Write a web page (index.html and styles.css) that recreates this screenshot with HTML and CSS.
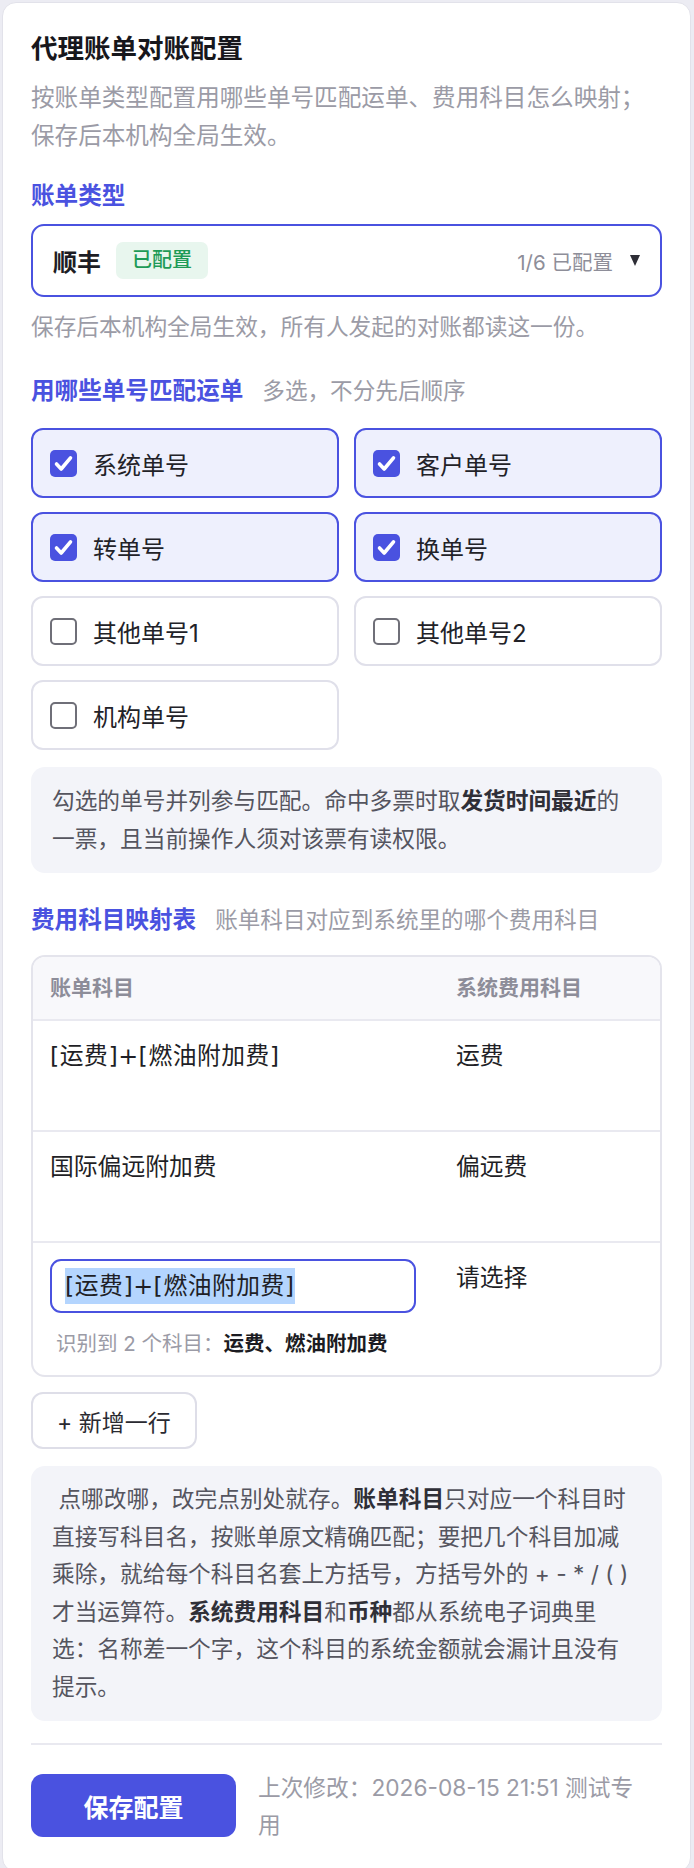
FILE: index.html
```html
<!DOCTYPE html>
<html lang="zh-CN">
<head>
<meta charset="utf-8">
<title>代理账单对账配置</title>
<link rel="stylesheet" href="styles.css">
</head>
<body>
<div class="card">
  <h1 class="title">代理账单对账配置</h1>
  <p class="desc">按账单类型配置用哪些单号匹配运单、费用科目怎么映射；保存后本机构全局生效。</p>

  <div class="label label-first">账单类型</div>
  <div class="select">
    <span class="sel-name">顺丰</span>
    <span class="badge">已配置</span>
    <span class="sel-count">1/6 已配置</span>
    <svg class="sel-arrow" width="10" height="11" viewBox="0 0 10 11"><polygon points="0,0 10,0 5,11" fill="#2e2e36"/></svg>
  </div>
  <p class="helper">保存后本机构全局生效，所有人发起的对账都读这一份。</p>

  <div class="label-row">
    <span class="label">用哪些单号匹配运单</span>
    <span class="hint">多选，不分先后顺序</span>
  </div>
  <div class="opts">
    <div class="opt on"><span class="box"><svg width="27" height="27" viewBox="0 0 27 27"><path d="M6.5 14 L11.2 19 L20.5 7.8" fill="none" stroke="#fff" stroke-width="3.6" stroke-linecap="round" stroke-linejoin="round"/></svg></span>系统单号</div>
    <div class="opt on"><span class="box"><svg width="27" height="27" viewBox="0 0 27 27"><path d="M6.5 14 L11.2 19 L20.5 7.8" fill="none" stroke="#fff" stroke-width="3.6" stroke-linecap="round" stroke-linejoin="round"/></svg></span>客户单号</div>
    <div class="opt on"><span class="box"><svg width="27" height="27" viewBox="0 0 27 27"><path d="M6.5 14 L11.2 19 L20.5 7.8" fill="none" stroke="#fff" stroke-width="3.6" stroke-linecap="round" stroke-linejoin="round"/></svg></span>转单号</div>
    <div class="opt on"><span class="box"><svg width="27" height="27" viewBox="0 0 27 27"><path d="M6.5 14 L11.2 19 L20.5 7.8" fill="none" stroke="#fff" stroke-width="3.6" stroke-linecap="round" stroke-linejoin="round"/></svg></span>换单号</div>
    <div class="opt"><span class="box"></span>其他单号1</div>
    <div class="opt"><span class="box"></span>其他单号2</div>
    <div class="opt"><span class="box"></span>机构单号</div>
  </div>
  <div class="info info-1">勾选的单号并列参与匹配。命中多票时取<b>发货时间最近</b>的一票，且当前操作人须对该票有读权限。</div>

  <div class="label-row label-row-map">
    <span class="label">费用科目映射表</span>
    <span class="hint">账单科目对应到系统里的哪个费用科目</span>
  </div>
  <div class="map">
    <div class="mrow mhead">
      <div class="mcell">账单科目</div>
      <div class="mcell">系统费用科目</div>
    </div>
    <div class="mrow tall">
      <div class="mcell formula">[运费]+[燃油附加费]</div>
      <div class="mcell">运费</div>
    </div>
    <div class="mrow tall">
      <div class="mcell">国际偏远附加费</div>
      <div class="mcell">偏远费</div>
    </div>
    <div class="mrow">
      <div class="mcell">
        <div class="input"><span class="sel-text formula">[运费]+[燃油附加费]</span></div>
        <div class="parse">识别到 2 个科目：<b>运费、燃油附加费</b></div>
      </div>
      <div class="mcell mcell-pick">请选择</div>
    </div>
  </div>
  <button class="add-btn">+ 新增一行</button>
  <div class="info info-2">&nbsp;点哪改哪，改完点别处就存。<b>账单科目</b>只对应一个科目时直接写科目名，按账单原文精确匹配；要把几个科目加减乘除，就给每个科目名套上方括号，方括号外的 + - * / ( ) 才当运算符。<b>系统费用科目</b>和<b>币种</b>都从系统电子词典里选：名称差一个字，这个科目的系统金额就会漏计且没有提示。</div>

  <div class="footer">
    <button class="save-btn">保存配置</button>
    <div class="meta">上次修改：2026-08-15 21:51 测试专用</div>
  </div>
</div>
</body>
</html>
```

FILE: styles.css
```css
html, body {
  margin: 0;
  padding: 0;
}
body {
  background: #ececf3;
  padding: 2px 3px 4px 2px;
  font-family: "Inter", "Noto Sans CJK SC", sans-serif;
  color: #1d1d24;
}
.card {
  background: #ffffff;
  border: 1px solid #e2e2ea;
  border-radius: 14px;
  padding: 28px 28px 28px 28px;
}
.title {
  margin: 0;
  font-size: 26.5px;
  line-height: 34px;
  font-weight: 700;
  color: #17171c;
}
.desc {
  margin: 14px 0 0;
  font-size: 23.6px;
  line-height: 38px;
  color: #9b9ba6;
}
.label {
  font-size: 23.6px;
  line-height: 33px;
  font-weight: 700;
  color: #4a52e0;
}
.label-first {
  margin-top: 24px;
}
.select {
  margin-top: 12px;
  height: 73px;
  box-sizing: border-box;
  border: 2px solid #4a52e0;
  border-radius: 13px;
  display: flex;
  align-items: center;
  padding: 0 20px;
}
.sel-name {
  font-size: 24px;
  font-weight: 600;
  color: #1d1d24;
}
.badge {
  margin-left: 15px;
  background: #e8f6ee;
  color: #1e9b57;
  font-size: 20px;
  line-height: 37px;
  padding: 0 16px;
  border-radius: 7px;
  font-weight: 500;
}
.sel-count {
  margin-left: auto;
  font-size: 20.5px;
  color: #8e8e99;
}
.sel-arrow {
  margin-left: 17px;
}
.helper {
  margin: 12px 0 0;
  font-size: 22.7px;
  line-height: 36px;
  color: #9b9ba6;
}
.label-row {
  margin-top: 28px;
  display: flex;
  align-items: baseline;
  gap: 19px;
}
.hint {
  font-size: 22.6px;
  color: #9b9ba6;
}
.opts {
  margin-top: 21px;
  display: grid;
  grid-template-columns: 1fr 1fr;
  gap: 14px 15px;
}
.opt {
  height: 70px;
  box-sizing: border-box;
  border: 2px solid #e0e0ea;
  border-radius: 12px;
  padding-left: 17px;
  display: flex;
  align-items: center;
  gap: 16px;
  font-size: 24px;
  color: #222228;
  background: #ffffff;
}
.opt.on {
  border-color: #4a52e0;
  background: #eef0fd;
}
.box {
  width: 27px;
  height: 27px;
  box-sizing: border-box;
  border: 2px solid #6f6f78;
  border-radius: 5px;
  background: #ffffff;
  flex: none;
  display: flex;
}
.opt.on .box {
  border: none;
  background: #4a52e0;
}
.info {
  background: #f3f4f9;
  border-radius: 14px;
  font-size: 22.7px;
  color: #55555f;
}
.info b {
  color: #2f2f37;
  font-weight: 700;
}
.info-1 {
  margin-top: 17px;
  padding: 15px 30px 15px 21px;
  line-height: 38px;
}
.label-row-map {
  margin-top: 29px;
}
.map {
  margin-top: 19px;
  border: 2px solid #e4e4ec;
  border-radius: 14px;
  overflow: hidden;
}
.mrow {
  display: grid;
  grid-template-columns: 406px 1fr;
  border-top: 2px solid #e9e9f0;
}
.mrow.mhead {
  border-top: none;
  background: #f8f8fb;
  height: 62px;
  align-items: center;
}
.mhead .mcell {
  padding: 0 17px;
  font-size: 21px;
  font-weight: 600;
  color: #8d8d99;
}
.mcell {
  padding: 16px 17px;
  font-size: 23.8px;
  line-height: 38px;
  color: #1f1f26;
}
.formula {
  font-family: "DejaVu Sans", "Noto Sans CJK SC", sans-serif;
  letter-spacing: 0.5px;
}
.mrow.tall {
  height: 109px;
}
.mcell-pick {
  line-height: 34px;
  padding-top: 18px;
}
.input {
  height: 54px;
  box-sizing: border-box;
  border: 2px solid #4a52e0;
  border-radius: 11px;
  padding: 0 13px;
  display: flex;
  align-items: center;
  width: 366px;
}
.sel-text {
  background: #b4d5fe;
  line-height: 36px;
  font-size: 23.8px;
  color: #1f1f26;
}
.parse {
  margin: 16px 0 0 6px;
  font-size: 20.5px;
  line-height: 30px;
  color: #9b9ba6;
}
.parse b {
  color: #1b1b22;
  font-weight: 700;
}
.add-btn {
  display: block;
  margin-top: 15px;
  height: 57px;
  padding: 0 24px;
  box-sizing: border-box;
  border: 2px solid #dedee8;
  border-radius: 12px;
  background: #ffffff;
  font-family: inherit;
  font-size: 23px;
  color: #2a2a31;
}
.info-2 {
  margin-top: 17px;
  padding: 14px 30px 15px 21px;
  line-height: 37.6px;
}
.footer {
  margin-top: 22px;
  border-top: 2px solid #e9e9f0;
  padding-top: 24px;
  display: flex;
  align-items: center;
  gap: 22px;
}
.save-btn {
  flex: none;
  width: 205px;
  height: 63px;
  border: none;
  border-radius: 12px;
  background: #4a52e0;
  color: #ffffff;
  font-family: inherit;
  font-size: 25px;
  font-weight: 700;
}
.meta {
  max-width: 386px;
  font-size: 22.7px;
  line-height: 37px;
  color: #9b9ba6;
}
```
